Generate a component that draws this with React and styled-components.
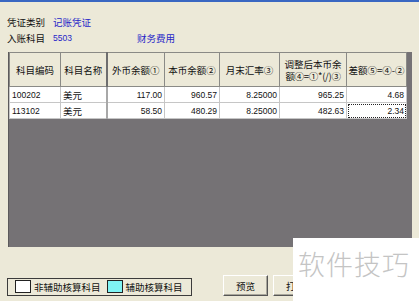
import React from 'react'
import styled, { createGlobalStyle } from 'styled-components'

const GlobalStyle = createGlobalStyle`
    body {
        margin: 0;
        background: #ece9d8;
        font-family: "Noto Sans CJK SC", "Liberation Sans", sans-serif;
    }
`;

const Window = styled.div`
    position: relative;
    width: 419px;
    height: 301px;
    overflow: hidden;
    background: #ece9d8;
    border-top: 2px solid #3a67c2;
    box-sizing: border-box;
`;

const InfoArea = styled.div`
    padding: 12px 0 0 7px;
    display: flex;
    flex-direction: column;
`;

const InfoRow = styled.div`
    display: flex;
    align-items: center;
    height: 16px;
    font-size: 9.5px;
    line-height: 16px;
`;

const Label = styled.span`
    width: 46px;
    color: #111;
`;

const Value = styled.span`
    color: #2626c8;
    width: ${p => p.w || 'auto'};
    font-family: ${p => p.num ? '"Liberation Sans", sans-serif' : 'inherit'};
    font-size: ${p => p.num ? '8.5px' : 'inherit'};
`;

const Panel = styled.div`
    margin: 6px 0 0 8px;
    width: 404px;
    height: 195px;
    background: #757275;
    border-left: 1px solid #5c5a5c;
    box-sizing: border-box;
`;

const Table = styled.table`
    border-collapse: collapse;
    table-layout: fixed;
    width: 397px;
`;

const HeadCell = styled.th`
    height: 33px;
    padding: 0;
    background: #ece9d8;
    border: 1px solid #8a8a86;
    border-left: ${p => p.split ? '2px solid #6e6e6e' : '1px solid #8a8a86'};
    font-size: 9.5px;
    font-weight: normal;
    line-height: 12px;
    color: #111;
    text-align: center;
    white-space: nowrap;
    overflow: hidden;
`;

const HeadLine = styled.span`
    display: block;
    height: 12px;
    letter-spacing: ${p => p.tight ? '-0.3px' : '0'};
`;

const Cell = styled.td`
    height: 15px;
    padding: 0 2px;
    background: #fff;
    border: 1px solid #c6c6c6;
    border-left: ${p => p.split ? '2px solid #a8a8a8' : '1px solid #c6c6c6'};
    outline: ${p => p.focus ? '1px dotted #222' : 'none'};
    outline-offset: -2px;
    font-family: ${p => p.cjk ? '"Noto Sans CJK SC", sans-serif' : '"Liberation Sans", sans-serif'};
    font-size: ${p => p.cjk ? '9.5px' : '8.5px'};
    line-height: 14px;
    color: #111;
    text-align: ${p => p.right ? 'right' : 'left'};
    white-space: nowrap;
    overflow: hidden;
`;

const Footer = styled.div`
    display: flex;
    align-items: center;
    width: 286px;
    overflow: hidden;
    margin: 28px 0 0 7px;
`;

const Legend = styled.div`
    display: flex;
    flex-shrink: 0;
    align-items: center;
    width: 185px;
    height: 18px;
    box-sizing: border-box;
    border: 1px solid #3c3c3c;
    padding-left: 7px;
    font-size: 9.5px;
    color: #111;
    margin-top: 2px;
`;

const Swatch = styled.span`
    width: 14px;
    height: 11px;
    border: 1px solid #222;
    background: ${p => p.color};
    margin-right: 3px;
`;

const LegendText = styled.span`
    margin-right: 6px;
`;

const Button = styled.button`
    flex-shrink: 0;
    width: 45px;
    height: 21px;
    margin-left: ${p => p.first ? '31px' : '5px'};
    background: #ece9d8;
    border: 1px solid;
    border-color: #fff #555 #555 #fff;
    box-shadow: inset -1px -1px 0 #a9a79c;
    font-family: "Noto Sans CJK SC", sans-serif;
    font-size: 9.5px;
    color: #111;
    padding: 0;
`;

const Watermark = styled.div`
    position: absolute;
    left: 293px;
    top: 236px;
    right: 0;
    bottom: 0;
    background: #fff;
    padding: 11px 0 0 5px;
    font-size: 27px;
    font-weight: 300;
    line-height: 30px;
    color: #c4c4c4;
    letter-spacing: 1px;
`;

const columns = [
    { title: '科目编码', width: 51 },
    { title: '科目名称', width: 46 },
    { title: '外币余额①', width: 58, split: true },
    { title: '本币余额②', width: 55 },
    { title: '月末汇率③', width: 60 },
    {
        title: <><HeadLine>调整后本币余</HeadLine><HeadLine tight>额④=①*(/)③</HeadLine></>,
        width: 67
    },
    { title: '差额⑤=④-②', width: 60 },
];

const rows = [
    ['100202', '美元', '117.00', '960.57', '8.25000', '965.25', '4.68'],
    ['113102', '美元', '58.50', '480.29', '8.25000', '482.63', '2.34'],
];

function App() {
    return (
        <Window>
            <GlobalStyle />
            <InfoArea>
                <InfoRow>
                    <Label>凭证类别</Label>
                    <Value>记账凭证</Value>
                </InfoRow>
                <InfoRow>
                    <Label>入账科目</Label>
                    <Value num w="84px">5503</Value>
                    <Value>财务费用</Value>
                </InfoRow>
            </InfoArea>

            <Panel>
                <Table>
                    <colgroup>
                        {columns.map((c, i) => <col key={i} style={{ width: c.width }} />)}
                    </colgroup>
                    <thead>
                        <tr>
                            {columns.map((c, i) => (
                                <HeadCell key={i} split={c.split}>{c.title}</HeadCell>
                            ))}
                        </tr>
                    </thead>
                    <tbody>
                        {rows.map((r, ri) => (
                            <tr key={ri}>
                                {r.map((v, ci) => (
                                    <Cell
                                        key={ci}
                                        cjk={ci === 1}
                                        right={ci > 1}
                                        split={ci === 2}
                                        focus={ri === 1 && ci === 6}
                                    >
                                        {v}
                                    </Cell>
                                ))}
                            </tr>
                        ))}
                    </tbody>
                </Table>
            </Panel>

            <Footer>
                <Legend>
                    <Swatch color="#ffffff" />
                    <LegendText>非辅助核算科目</LegendText>
                    <Swatch color="#7ff4f4" />
                    <LegendText>辅助核算科目</LegendText>
                </Legend>
                <Button first>预览</Button>
                <Button>打印</Button>
            </Footer>

            <Watermark>软件技巧</Watermark>
        </Window>
    )
}

export default App
